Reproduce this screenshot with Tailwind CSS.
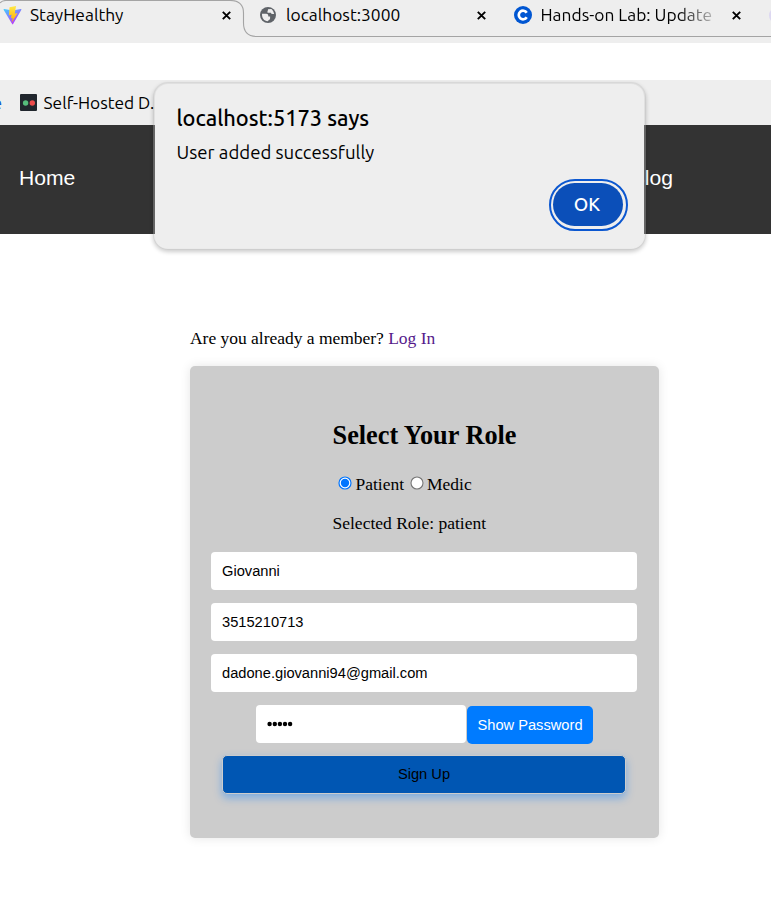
<!DOCTYPE html>
<html lang="en">
<head>
<meta charset="utf-8">
<title>StayHealthy</title>
<script src="https://cdn.jsdelivr.net/npm/@tailwindcss/browser@4"></script>
</head>
<body class="relative w-[771px] h-[907px] overflow-hidden bg-white text-black">
<div class="relative h-[43px] bg-[#eeeeee] overflow-hidden font-['Ubuntu','Noto_Sans',sans-serif] text-[17.4px]">
  <svg class="absolute left-0 top-0" width="771" height="43" fill="none" stroke="#a4a4a4" stroke-width="1.1"><path d="M0 3Q2 .5 6 .5H230Q243.500 .5 243.500 13V23Q243.500 36.500 257 36.500H771"/></svg>
  <div class="relative flex h-[30px] items-center">
    <div class="flex w-[243px] shrink-0 items-center pl-[3px]">
      <svg width="19" height="19" viewBox="0 0 32 32" class="shrink-0"><defs><linearGradient id="v" x1="0" y1="0" x2=".6" y2="1"><stop stop-color="#41d1ff"/><stop offset="1" stop-color="#bd34fe"/></linearGradient><linearGradient id="b" x1="0" y1="0" x2="0" y2="1"><stop stop-color="#ffea45"/><stop offset="1" stop-color="#ffa800"/></linearGradient></defs><path fill="url(#v)" d="M31 6.500 17 30.500q-.8 1-1.600 0L1 6.500q-.5-1.300 1-1.300l14 2.400 14-2.400q1.500 0 1 1.300Z"/><path fill="url(#b)" d="m22 0-11 2.200-1 13.500 4.500-.9-1.200 6 3-.6-1.600 7.500L24.500 12l-4.700.8L22 0Z"/></svg>
      <span class="ml-[8px] w-[190px] leading-[24px]">StayHealthy</span>
      <svg width="9" height="9" viewBox="0 0 9 9" class="ml-[2px] shrink-0" stroke="#000" stroke-width="1.900"><path d="m.8.8 7.400 7.400M8.200.8.8 8.200"/></svg>
    </div>
    <div class="flex w-[255px] shrink-0 items-center pl-[17px]">
      <svg width="16" height="16" viewBox="0 0 16 16" class="shrink-0"><circle cx="8" cy="8" r="8" fill="#5f6368"/><path d="M2 6.800h4.300q2 0 2 2v.8h1.800v1.800q0 1-1.500 1.800l-.8 1C4 14 1.800 11.300 2 6.800Zm6-4.500 3.400-.2q2.500 2 2.800 5h-1.600q-1.500 0-1.800-1.400H7.500V4.100q.5-.3.500-1.800Z" fill="#eee"/></svg>
      <span class="ml-[10px] w-[186px] leading-[24px]">localhost:3000</span>
      <svg width="9" height="9" viewBox="0 0 9 9" class="ml-[5px] shrink-0" stroke="#000" stroke-width="1.900"><path d="m.8.8 7.400 7.400M8.200.8.8 8.200"/></svg>
    </div>
    <div class="flex w-[273px] shrink-0 items-center pl-[16px]">
      <svg width="18" height="18" viewBox="0 0 18 18" class="shrink-0" fill="none"><circle cx="9" cy="9" r="9" fill="#0056d2"/><path d="M12.700 6.700A4.300 4.300 0 1 0 12.700 11.300" stroke="#fff" stroke-width="2.700"/></svg>
      <span class="ml-[8.500px] w-[182px] shrink-0 overflow-hidden whitespace-nowrap leading-[24px] bg-linear-to-r from-black from-75% to-transparent to-100% bg-clip-text text-transparent">Hands-on Lab: Update</span>
      <svg width="9" height="9" viewBox="0 0 9 9" class="ml-[9.500px] shrink-0" stroke="#000" stroke-width="1.900"><path d="m.8.8 7.400 7.400M8.200.8.8 8.200"/></svg>
      <span class="ml-[28px] size-[17px] shrink-0 rounded-full bg-[#ddd8f1]"></span>
    </div>
  </div>
</div>
<div class="h-[37px] bg-white"></div>
<div class="flex h-[45px] items-center overflow-hidden bg-[#eeeeee] font-['Ubuntu','Noto_Sans',sans-serif] text-[17.33px]">
  <span class="flex w-[2px] shrink-0 justify-end text-[#0b57d0]">e</span>
  <svg class="ml-[18px] shrink-0" width="17" height="17"><rect width="17" height="17" rx="1" fill="#20262d"/><circle cx="5.600" cy="9" r="2.700" fill="#55bd7c"/><circle cx="12.300" cy="9" r="2.700" fill="#ec4b4b"/></svg>
  <span class="ml-[6.500px] whitespace-nowrap">Self-Hosted D...</span>
</div>
<nav class="flex h-[109px] items-center justify-between bg-[#333333] pl-[19px] pr-[98px] pb-[3px] font-['Liberation_Sans',sans-serif] text-[21.12px] text-white">
  <span>Home</span><span>Blog</span>
</nav>

<main class="ml-[190px] w-[469px] pt-[92px] font-['Liberation_Serif',serif] text-[17.5px]">
  <p class="h-[40px] whitespace-nowrap leading-[24px] tracking-[-0.02px]">Are you already a member? <a class="text-[#551a8b]">Log In</a></p>
  <form class="flex h-[472px] flex-col items-center rounded-[5px] bg-[#cccccc] pt-[54px] shadow-[0_0_11px_rgba(0,0,0,0.1)]">
    <div class="w-[184px] whitespace-nowrap">
      <h2 class="h-[52px] text-[26.3px] font-bold leading-[32px]">Select Your Role</h2>
      <div class="flex h-[24px] items-center">
        <svg class="ml-[5px] mb-[3px]" width="14" height="14"><circle cx="7" cy="7" r="6" fill="#fff" stroke="#0075ff" stroke-width="1.200"/><circle cx="7" cy="7" r="4.200" fill="#0075ff"/></svg>
        <span class="ml-[4px] w-[54px]">Patient</span>
        <svg class="mb-[3px]" width="14" height="14"><circle cx="7" cy="7" r="6" fill="#fff" stroke="#767676" stroke-width="1.100"/></svg>
        <span class="ml-[3.500px]">Medic</span>
      </div>
      <p class="mt-[15px] leading-[24px]">Selected Role: patient</p>
    </div>
    <div class="mt-[17px] mr-[1px] flex w-[426px] flex-col gap-[13px] font-['Liberation_Sans',sans-serif] text-[14.67px]">
      <div class="flex h-[38px] items-center rounded-[4px] bg-white pl-[11px]">Giovanni</div>
      <div class="flex h-[38px] items-center rounded-[4px] bg-white pl-[11px]">3515210713</div>
      <div class="flex h-[38px] items-center rounded-[4px] bg-white pl-[11px]">dadone.giovanni94@gmail.com</div>
      <div class="ml-[45px] flex h-[38px]">
        <div class="flex w-[210px] items-center rounded-[4px] bg-white pl-[11px]"><svg width="26" height="6"><circle cx="2.600" cy="3" r="2.200"/><circle cx="7.800" cy="3" r="2.200"/><circle cx="12.900" cy="3" r="2.200"/><circle cx="18" cy="3" r="2.200"/><circle cx="23.100" cy="3" r="2.200"/></svg></div>
        <div class="mt-[1px] ml-[1px] flex h-[38px] w-[126px] items-center justify-center rounded-[5px] bg-[#007bff] text-white">Show Password</div>
      </div>
      <div class="-mt-[1px] ml-[11px] flex h-[39px] w-[404px] items-center justify-center rounded-[5px] border border-[#cccccc] bg-[#0056b3] pb-[2px] text-black shadow-[0_4px_9px_rgba(0,123,255,0.4)]">Sign Up</div>
    </div>
  </form>
</main>

<div class="absolute left-[153px] top-[82px] h-[168px] w-[493px] rounded-[15px] border-2 border-[#c5c5c5]/35 bg-[#eeeeee] bg-clip-padding pl-[21.500px] pt-[19px] font-['Ubuntu','Noto_Sans',sans-serif] shadow-[0_2px_4px_rgba(0,0,0,0.2)]">
  <div class="h-[34px] text-[21.8px] font-medium leading-[31px]">localhost:5173 says</div>
  <div class="text-[18.600px] leading-[31px]">User added successfully</div>
  <div class="absolute left-[394px] top-[95px] flex h-[52px] w-[79px] items-center justify-center rounded-[26px] border-2 border-[#0b57d0]">
    <div class="mr-[1px] mb-[1px] flex h-[43px] w-[70px] items-center justify-center rounded-[22px] bg-[#0b4fb9] pr-[2px] text-[18.600px] font-medium text-white">OK</div>
  </div>
</div>
</body>
</html>
